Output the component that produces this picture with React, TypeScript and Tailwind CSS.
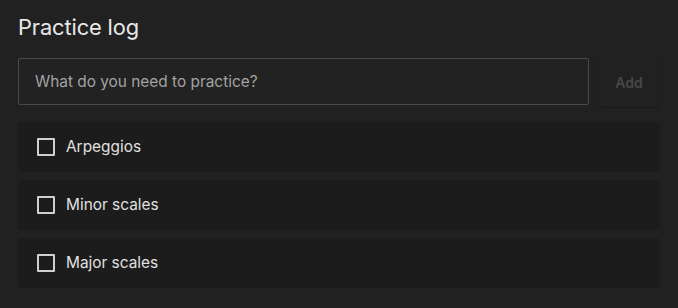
import { useState } from 'react';

const ITEMS = ['Arpeggios', 'Minor scales', 'Major scales'];

export default function App() {
  const [text, setText] = useState('');
  const [done, setDone] = useState<Record<string, boolean>>({});

  return (
    <main className="min-h-[308px] w-full bg-[#212121] px-[18px] pt-[12px] pb-[20px] font-['Inter','Liberation_Sans',sans-serif] text-[#e6e6e6]">
      <h1 className="text-[21.8px] leading-[30px] font-normal tracking-[-0.1px] text-[#e8e8e8]">Practice log</h1>

      <div className="mt-[16px] flex items-start gap-[9px]">
        <input
          value={text}
          onChange={(e) => setText(e.target.value)}
          placeholder="What do you need to practice?"
          className="h-[47px] flex-1 rounded-[2px] border border-[#4a4a4a] bg-[#222222] px-[16px] text-[15.4px] text-[#e6e6e6] placeholder-[#a3a3a3] outline-none"
        />
        <button
          disabled
          className="h-[49px] w-[62px] rounded-[6px] bg-[#212121] text-[14px] font-semibold text-[#474747] shadow-[0_1px_1px_rgba(0,0,0,0.25)]"
        >
          Add
        </button>
      </div>

      <ul className="mt-[15px] flex flex-col gap-[8px]">
        {ITEMS.map((item) => (
          <li key={item} className="flex h-[50px] items-center gap-[11px] rounded-[4px] bg-[#1b1c1b] px-[19px]">
            <button
              onClick={() => setDone({ ...done, [item]: !done[item] })}
              className="h-[18px] w-[18px] rounded-[1px] border-2 border-[#cfcfcf]"
              aria-label={item}
            />
            <span className="text-[15.4px] text-[#e0e0e0]">{item}</span>
          </li>
        ))}
      </ul>
    </main>
  );
}
